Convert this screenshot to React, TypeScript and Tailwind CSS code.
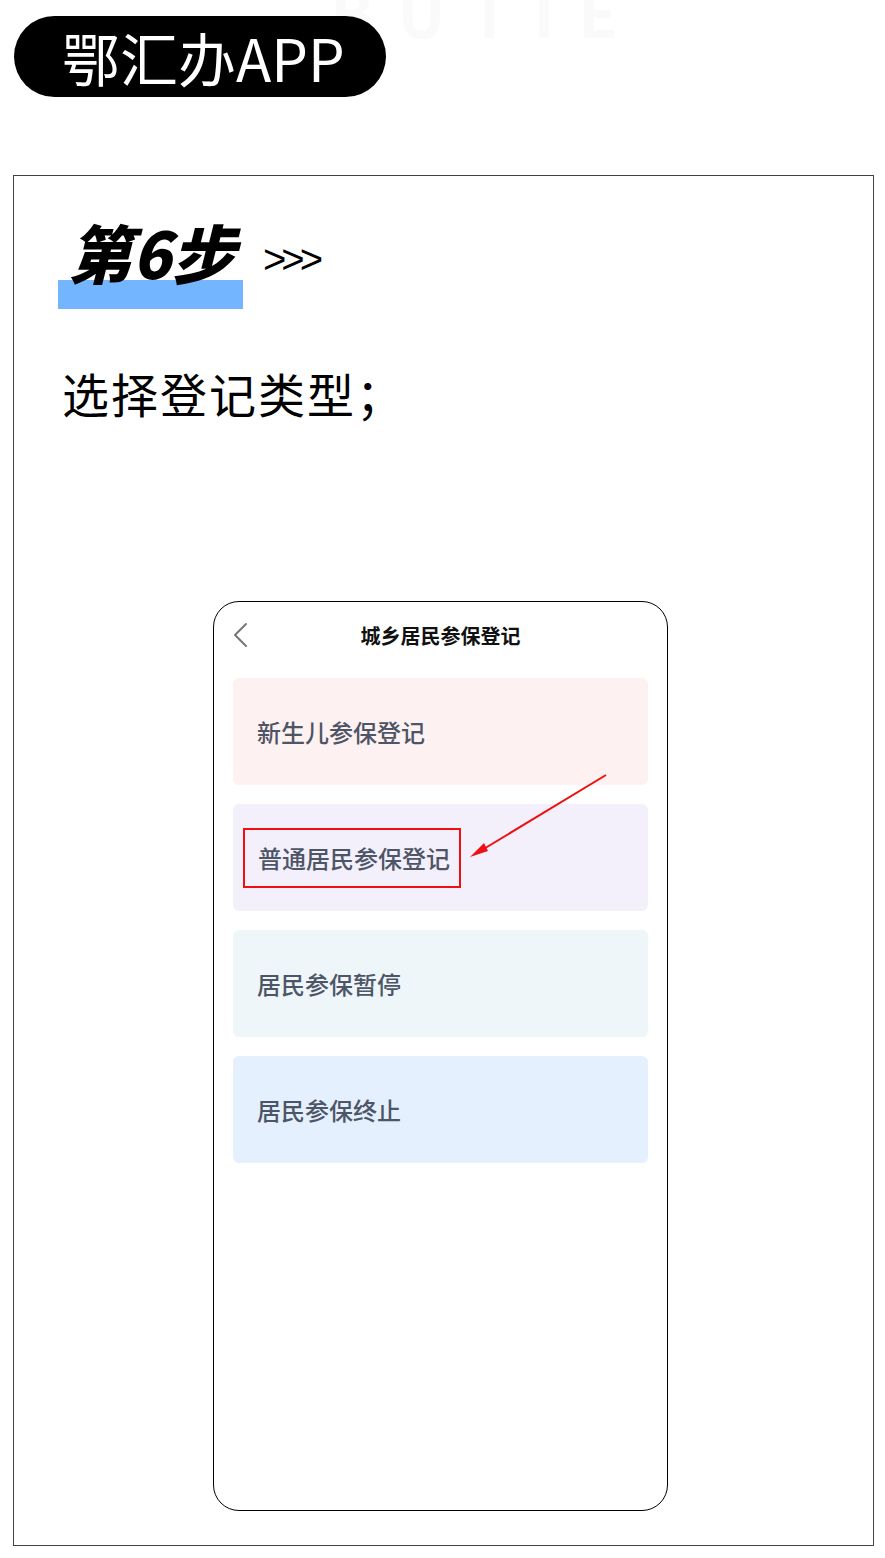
import React from "react";

const cards = [
  { label: "新生儿参保登记", bg: "bg-[#fdf1f1]", marked: false },
  { label: "普通居民参保登记", bg: "bg-[#f3f0fb]", marked: true },
  { label: "居民参保暂停", bg: "bg-[#eef6fa]", marked: false },
  { label: "居民参保终止", bg: "bg-[#e4f0fd]", marked: false },
];

const font = "font-['Noto_Sans_CJK_SC','Noto_Sans',sans-serif]";

const App = () => {
  return (
    <div className={`relative w-[885px] h-[1558px] bg-white overflow-hidden ${font}`}>
      {/* 배경 글자 */}
      <div className="absolute left-[330px] top-[-22px] text-[64px] leading-none font-bold tracking-[24px] text-[#fafafa] select-none">
        BUTIE
      </div>

      {/* 상단 라벨 */}
      <div className="relative ml-[14px] mt-[16px] w-[372px] h-[81px] rounded-full bg-black flex items-center pl-[48px]">
        <span className="text-white text-[58px] leading-none">鄂汇办APP</span>
      </div>

      {/* 본문 박스 */}
      <div className="ml-[13px] mt-[78px] w-[861px] h-[1371px] border border-[#444] pt-[46px]">
        {/* 단계 제목 */}
        <div className="flex items-end ml-[44px]">
          <div className="relative w-[185px] h-[87px]">
            <div className="absolute left-0 bottom-0 w-[185px] h-[29px] bg-[#74b5ff]" />
            <span className="absolute left-[10px] top-[-3px] text-[64px] leading-none font-black italic text-black">
              第6步
            </span>
          </div>
          <span className="ml-[20px] mb-[30px] text-[40px] leading-none text-black tracking-[-5px] font-['Liberation_Sans',sans-serif]">
            &gt;&gt;&gt;
          </span>
        </div>

        <div className="ml-[48px] mt-[60px] text-[47px] leading-none tracking-[2px] text-black">选择登记类型；</div>

        {/* 휴대폰 화면 */}
        <div className="relative ml-[199px] mt-[185px] w-[455px] h-[910px] rounded-[26px] border-[1.5px] border-black">
          <div className="relative h-[66px] flex items-center justify-center">
            <svg className="absolute left-[18px] top-[20px]" width="16" height="26" viewBox="0 0 16 26" fill="none">
              <path d="M14 2 L3 13 L14 24" stroke="#777" strokeWidth="2" strokeLinecap="round" strokeLinejoin="round" />
            </svg>
            <span className="text-[20px] font-bold text-[#111] mt-[2px]">城乡居民参保登记</span>
          </div>

          <div className="flex flex-col gap-[19px] px-[19px] mt-[10px]">
            {cards.map((c) => (
              <div key={c.label} className={`h-[107px] rounded-[6px] ${c.bg} flex items-center`}>
                {c.marked ? (
                  <div className="ml-[10px] h-[60px] flex items-center pl-[13px] pr-[9px] border-2 border-[#ee1111]">
                    <span className="text-[24px] font-medium text-[#4d5566]">{c.label}</span>
                  </div>
                ) : (
                  <span className="ml-[24px] text-[24px] font-medium text-[#4d5566]">{c.label}</span>
                )}
              </div>
            ))}
          </div>

          {/* 빨간 화살표 */}
          <svg className="absolute left-0 top-0 pointer-events-none" width="455" height="910" viewBox="0 0 455 910">
            <line x1="392" y1="173" x2="268" y2="248" stroke="#ee1111" strokeWidth="2" />
            <path d="M256 255 L270 241 L274 249 Z" fill="#ee1111" />
          </svg>
        </div>
      </div>
    </div>
  );
};

export default App;
